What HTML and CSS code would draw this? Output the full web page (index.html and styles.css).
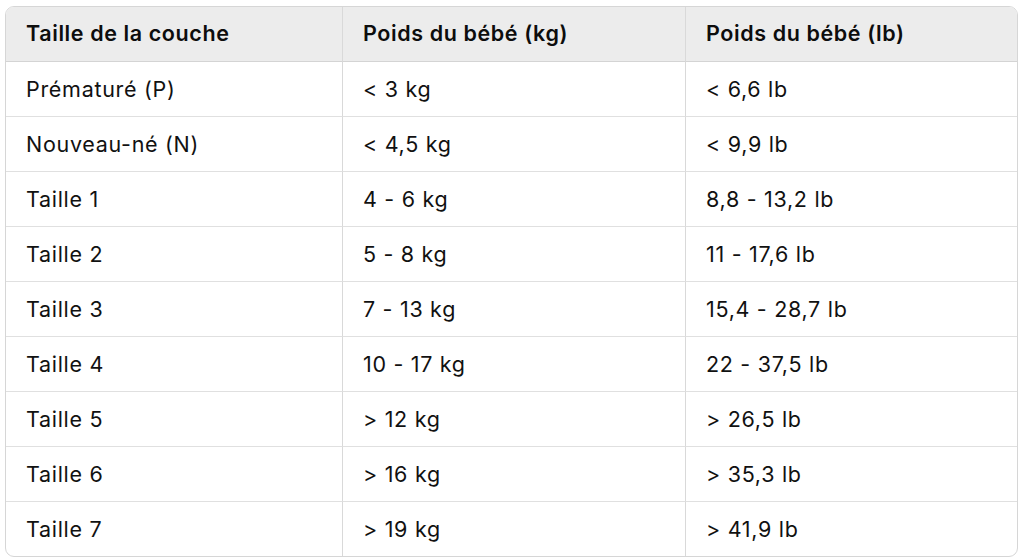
FILE: index.html
```html
<!DOCTYPE html>
<html lang="fr">
<head>
<meta charset="utf-8">
<link rel="stylesheet" href="styles.css">
</head>
<body>
<div class="wrap">
<table class="grid">
<colgroup><col class="c1"><col class="c2"><col class="c3"></colgroup>
<thead>
<tr><th>Taille de la couche</th><th>Poids du bébé (kg)</th><th>Poids du bébé (lb)</th></tr>
</thead>
<tbody>
<tr><td>Prématuré (P)</td><td>&lt; 3 kg</td><td>&lt; 6,6 lb</td></tr>
<tr><td>Nouveau-né (N)</td><td>&lt; 4,5 kg</td><td>&lt; 9,9 lb</td></tr>
<tr><td>Taille 1</td><td>4 - 6 kg</td><td>8,8 - 13,2 lb</td></tr>
<tr><td>Taille 2</td><td>5 - 8 kg</td><td>11 - 17,6 lb</td></tr>
<tr><td>Taille 3</td><td>7 - 13 kg</td><td>15,4 - 28,7 lb</td></tr>
<tr><td>Taille 4</td><td>10 - 17 kg</td><td>22 - 37,5 lb</td></tr>
<tr><td>Taille 5</td><td>&gt; 12 kg</td><td>&gt; 26,5 lb</td></tr>
<tr><td>Taille 6</td><td>&gt; 16 kg</td><td>&gt; 35,3 lb</td></tr>
<tr><td>Taille 7</td><td>&gt; 19 kg</td><td>&gt; 41,9 lb</td></tr>
</tbody>
</table>
</div>
</body>
</html>
```
FILE: styles.css
```css
html, body { margin: 0; background: #ffffff; }
body { padding: 6px 6px 0 5px; font-family: Inter, "Liberation Sans", sans-serif; color: #111111; }
.wrap { width: 1013px; border: 1px solid #d6d6d6; border-radius: 9px; overflow: hidden; box-sizing: border-box; }
.grid { width: 100%; border-collapse: separate; border-spacing: 0; table-layout: fixed; }
.c1 { width: 336px; }
.c2 { width: 343px; }
.c3 { width: auto; }
th, td { text-align: left; padding: 0 0 0 20px; font-size: 21.5px; letter-spacing: 0.7px; border-left: 1px solid #d9d9d9; white-space: nowrap; }
th:first-child, td:first-child { border-left: none; }
th { background: #ececec; height: 52px; padding-bottom: 2px; font-weight: 600; color: #0d0d0d; border-bottom: 1px solid #d4d4d4; letter-spacing: 0.6px; }
td { height: 54px; font-weight: 400; border-top: 1px solid #e0e0e0; }
tbody tr:first-child td { border-top: none; }
```
